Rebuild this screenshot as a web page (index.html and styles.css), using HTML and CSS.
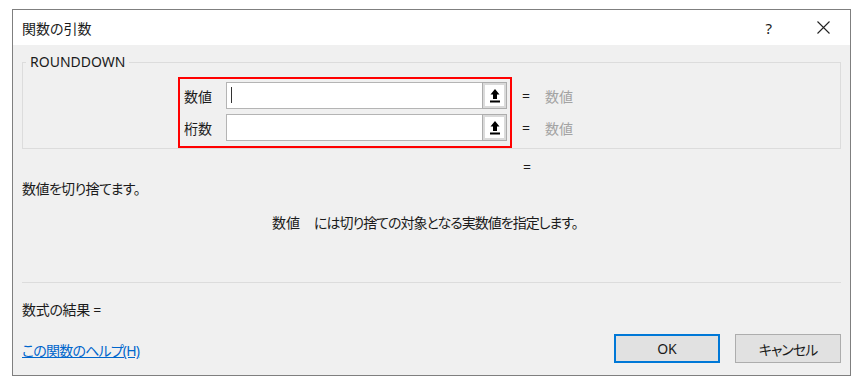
FILE: index.html
```html
<!DOCTYPE html>
<html lang="ja">
<head>
    <meta charset="UTF-8">
    <title>関数の引数</title>
    <link rel="stylesheet" href="styles.css">
</head>
<body>
    <div class="dialog">
        <div class="titlebar">
            <span class="title">関数の引数</span>
            <span class="help">?</span>
            <span class="close">
                <svg width="13" height="13" viewBox="0 0 13 13"><path d="M0.5 0.5 L12.5 12.5 M12.5 0.5 L0.5 12.5" stroke="#222" stroke-width="1.1" fill="none"/></svg>
            </span>
        </div>

        <div class="content">
            <fieldset class="group">
                <legend>ROUNDDOWN</legend>
                <div class="args">
                    <div class="arg-box">
                        <div class="arg-row">
                            <span class="arg-label">数値</span>
                            <div class="ref-input">
                                <span class="field"><span class="caret"></span></span>
                                <span class="ref-btn">
                                    <svg width="12" height="16" viewBox="0 0 12 16"><path d="M6 1 L1.5 6.5 L4 6.5 L4 11 L8 11 L8 6.5 L10.5 6.5 Z" fill="#000"/><rect x="1" y="12.5" width="10" height="2" fill="#000"/></svg>
                                </span>
                            </div>
                        </div>
                        <div class="arg-row">
                            <span class="arg-label">桁数</span>
                            <div class="ref-input">
                                <span class="field"></span>
                                <span class="ref-btn">
                                    <svg width="12" height="16" viewBox="0 0 12 16"><path d="M6 1 L1.5 6.5 L4 6.5 L4 11 L8 11 L8 6.5 L10.5 6.5 Z" fill="#000"/><rect x="1" y="12.5" width="10" height="2" fill="#000"/></svg>
                                </span>
                            </div>
                        </div>
                    </div>
                    <div class="arg-values">
                        <div class="arg-value"><span class="eq">=</span><span class="val">数値</span></div>
                        <div class="arg-value"><span class="eq">=</span><span class="val">数値</span></div>
                    </div>
                </div>
            </fieldset>

            <div class="result-eq">=</div>
            <p class="summary">数値を切り捨てます。</p>
            <div class="arg-help">
                <span class="arg-help-name">数値</span>
                <span class="arg-help-text">には切り捨ての対象となる実数値を指定します。</span>
            </div>

            <hr class="sep">
            <div class="formula">数式の結果 =</div>

            <div class="footer">
                <a class="help-link" href="#">この関数のヘルプ(H)</a>
                <button class="btn btn-default">OK</button>
                <button class="btn">キャンセル</button>
            </div>
        </div>
    </div>
</body>
</html>
```

FILE: styles.css
```css
body { margin: 0; background: #fff; font-family: "Noto Sans", "Noto Sans CJK JP", sans-serif; font-size: 14px; color: #1b1b1b; font-feature-settings: "palt"; }

.dialog { box-sizing: border-box; width: 839px; height: 367px; margin: 9px 0 0 12px; border: 1px solid #7f7f7f; display: flex; flex-direction: column; background: #f0f0f0; }

.titlebar { height: 35px; flex-shrink: 0; background: #fff; display: flex; align-items: center; padding-left: 9px; }
.title { flex: 1; }
.help { margin-right: 45px; font-size: 15px; }
.close { display: flex; margin-right: 20px; }

.content { flex: 1; padding: 0 9px; display: flex; flex-direction: column; }

.group { margin: 8px 0 0; padding: 6px 0 0; border: 1px solid #dcdcdc; min-width: 0; }
.group legend { margin-left: 3px; padding: 0 4px; line-height: 18px; }

.args { display: flex; margin-left: 155px; }
.arg-box { box-sizing: border-box; width: 334px; border: 2px solid #f00; padding: 3px 3px 5px 4px; display: flex; flex-direction: column; gap: 5px; }
.arg-row { display: flex; align-items: center; height: 27px; }
.arg-label { width: 42px; }
.ref-input { display: flex; width: 281px; height: 27px; }
.field { flex: 1; box-sizing: border-box; background: #fff; border: 1px solid #b4b4b4; border-right: none; }
.caret { display: block; width: 1px; height: 16px; margin: 4px 0 0 4px; background: #333; }
.ref-btn { box-sizing: border-box; width: 25px; border: 1px solid #adadad; background: #fff; box-shadow: inset 0 0 0 2px #dadada; display: flex; align-items: center; justify-content: center; }

.arg-values { margin-left: 10px; padding-top: 5px; display: flex; flex-direction: column; gap: 5px; }
.arg-value { height: 27px; display: flex; align-items: center; }
.eq { width: 23px; }
.val { color: #a3a3a3; }

.result-eq { margin: 9px 0 0 501px; line-height: 18px; }
.summary { margin: 4px 0 0; line-height: 18px; letter-spacing: -0.6px; }
.arg-help { margin: 16px 0 0 250px; display: flex; line-height: 18px; }
.arg-help-name { width: 42px; }
.arg-help-text { letter-spacing: -1px; }

.sep { margin: 50px 0 0; border: 0; border-top: 1px solid #dcdcdc; }
.formula { margin-top: 18px; line-height: 18px; letter-spacing: -0.3px; }

.footer { margin-top: 15px; display: flex; align-items: flex-end; }
.help-link { flex: 1; margin-bottom: 3px; line-height: 18px; color: #0066cc; letter-spacing: -0.8px; }
.btn { width: 106px; height: 29px; margin-left: 15px; font: inherit; color: #1b1b1b; background: #e1e1e1; border: 1px solid #adadad; }
.btn + .btn { letter-spacing: -1px; }
.btn-default { border-color: #0078d7; box-shadow: inset 0 0 0 1px #0078d7; }
```
